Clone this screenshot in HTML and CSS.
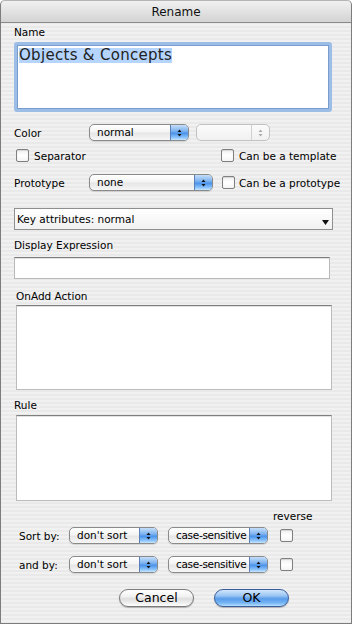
FILE: index.html
```html
<!DOCTYPE html>
<html lang="en">
<head>
  <meta charset="UTF-8">
  <meta name="viewport" content="width=device-width, initial-scale=1.0">
  <title>Rename</title>
  <link rel="stylesheet" href="styles.css">
</head>
<body>
<div class="window">
  <!-- Title bar -->
  <div class="titlebar">Rename</div>

  <div class="content">
    <div class="label">Name</div>
    <div class="name-field"><span class="selected">Objects &amp; Concepts</span></div>

    <!-- Color -->
    <div class="row color-row">
      <span class="row-label">Color</span>
      <div class="popup popup-color">
        <span class="popup-text">normal</span>
        <span class="arrows"><svg width="5" height="10" viewBox="0 0 5 10"><polygon points="0.5,4 2.5,1.5 4.5,4"/><polygon points="0.5,6 2.5,8.5 4.5,6"/></svg></span>
      </div>
      <div class="popup popup-disabled">
        <span class="popup-text"></span>
        <span class="arrows"><svg width="5" height="10" viewBox="0 0 5 10"><polygon points="0.5,4 2.5,1.5 4.5,4"/><polygon points="0.5,6 2.5,8.5 4.5,6"/></svg></span>
      </div>
    </div>

    <div class="row check-row">
      <div class="check check-sep"><span class="box"></span>Separator</div>
      <div class="check"><span class="box"></span>Can be a template</div>
    </div>

    <!-- Prototype -->
    <div class="row proto-row">
      <span class="row-label">Prototype</span>
      <div class="popup popup-proto">
        <span class="popup-text">none</span>
        <span class="arrows"><svg width="5" height="10" viewBox="0 0 5 10"><polygon points="0.5,4 2.5,1.5 4.5,4"/><polygon points="0.5,6 2.5,8.5 4.5,6"/></svg></span>
      </div>
      <div class="check check-proto"><span class="box"></span>Can be a prototype</div>
    </div>

    <div class="key-attrs">
      <span>Key attributes: normal</span>
      <svg width="7" height="5" viewBox="0 0 7 5"><polygon points="0,0 7,0 3.5,5"/></svg>
    </div>

    <div class="label label-display">Display Expression</div>
    <div class="text-field"></div>

    <div class="label label-onadd">OnAdd Action</div>
    <div class="text-area area-onadd"></div>

    <div class="label label-rule">Rule</div>
    <div class="text-area area-rule"></div>

    <!-- Sorting -->
    <div class="label label-reverse">reverse</div>
    <div class="row sort-row">
      <span class="sort-label">Sort by:</span>
      <div class="popup popup-sort">
        <span class="popup-text">don't sort</span>
        <span class="arrows"><svg width="5" height="10" viewBox="0 0 5 10"><polygon points="0.5,4 2.5,1.5 4.5,4"/><polygon points="0.5,6 2.5,8.5 4.5,6"/></svg></span>
      </div>
      <div class="popup popup-case">
        <span class="popup-text">case-sensitive</span>
        <span class="arrows"><svg width="5" height="10" viewBox="0 0 5 10"><polygon points="0.5,4 2.5,1.5 4.5,4"/><polygon points="0.5,6 2.5,8.5 4.5,6"/></svg></span>
      </div>
      <span class="box"></span>
    </div>
    <div class="row sort-row and-row">
      <span class="sort-label">and by:</span>
      <div class="popup popup-sort">
        <span class="popup-text">don't sort</span>
        <span class="arrows"><svg width="5" height="10" viewBox="0 0 5 10"><polygon points="0.5,4 2.5,1.5 4.5,4"/><polygon points="0.5,6 2.5,8.5 4.5,6"/></svg></span>
      </div>
      <div class="popup popup-case">
        <span class="popup-text">case-sensitive</span>
        <span class="arrows"><svg width="5" height="10" viewBox="0 0 5 10"><polygon points="0.5,4 2.5,1.5 4.5,4"/><polygon points="0.5,6 2.5,8.5 4.5,6"/></svg></span>
      </div>
      <span class="box"></span>
    </div>

    <!-- Buttons -->
    <div class="buttons">
      <button class="btn btn-cancel">Cancel</button>
      <button class="btn btn-ok">OK</button>
    </div>
  </div>
</div>
</body>
</html>
```

FILE: styles.css
```css
* {
  margin: 0;
  padding: 0;
  box-sizing: border-box;
}

html, body {
  background: #ffffff;
}

body {
  font-family: 'DejaVu Sans', 'Liberation Sans', sans-serif;
  font-size: 10.5px;
  color: #000;
  width: 352px;
  height: 624px;
  overflow: hidden;
}

/* Window */
.window {
  width: 352px;
  height: 624px;
  border: 1px solid #7c7c7c;
  border-top: none;
  border-radius: 5px 5px 0 0;
  background-color: #eeeeee;
  background-image: repeating-linear-gradient(to bottom, #f1f1f1 0, #f1f1f1 2px, #e9e9e9 2px, #e9e9e9 4px);
  display: flex;
  flex-direction: column;
  overflow: hidden;
}

.titlebar {
  height: 23px;
  line-height: 22px;
  margin: 0 -1px;
  text-align: center;
  font-size: 12px;
  background: linear-gradient(to bottom, #f1f1f1 0%, #e2e2e2 50%, #d3d3d3 100%);
  border: 1px solid #8a8a8a;
  border-top-color: #b5b5b5;
  border-radius: 5px 5px 0 0;
  color: #111;
}

.content {
  padding-left: 13px;
  display: flex;
  flex-direction: column;
  align-items: flex-start;
}

.label {
  height: 13px;
  line-height: 13px;
  margin-top: 3px;
  white-space: nowrap;
}

/* Name field with focus ring */
.name-field {
  margin-top: 3px;
  width: 318px;
  height: 70px;
  border: 3px solid #9bbde6;
  border-radius: 3px;
  background: #fff;
  box-shadow: inset 0 0 0 1px #7a9dcf;
  padding: 3px 0 0 2px;
  font-size: 15px;
  line-height: 15px;
  letter-spacing: 0.3px;
}

.name-field .selected {
  background: #b5d5ff;
  display: inline-block;
  height: 15px;
  color: #222;
}

/* Rows */
.row {
  display: flex;
  align-items: center;
  height: 17px;
}

.row-label {
  width: 75px;
}

.color-row {
  margin-top: 12px;
}

.check-row {
  margin-top: 6px;
}

.proto-row {
  margin-top: 10px;
}

/* Popup buttons */
.popup {
  height: 17px;
  display: flex;
  align-items: stretch;
  border: 1px solid #8a8a8a;
  border-radius: 5px;
  background: linear-gradient(to bottom, #ffffff 0%, #f4f4f4 45%, #e6e6e6 55%, #f6f6f6 100%);
  overflow: hidden;
  box-shadow: 0 1px 1px rgba(0, 0, 0, 0.12);
}

.popup-text {
  flex-grow: 1;
  padding-left: 7px;
  line-height: 15px;
  white-space: nowrap;
  overflow: hidden;
}

.arrows {
  width: 18px;
  display: flex;
  align-items: center;
  justify-content: center;
  background: linear-gradient(to bottom, #c4def9 0%, #7fb3f0 40%, #4a93ea 55%, #8fc6fb 85%, #c9e7ff 100%);
  border-left: 1px solid #5b7fb8;
}

.arrows svg {
  fill: #111;
}

.popup-color {
  width: 100px;
}

.popup-disabled {
  width: 74px;
  margin-left: 7px;
  border-color: #c2c2c2;
  background: linear-gradient(to bottom, #fbfbfb, #f1f1f1);
  box-shadow: none;
}

.popup-disabled .arrows {
  background: none;
  border-left: 1px solid #d0d0d0;
}

.popup-disabled .arrows svg {
  fill: #a8a8a8;
}

.popup-proto {
  width: 124px;
}

/* Checkboxes */
.check {
  display: flex;
  align-items: center;
  gap: 5px;
  white-space: nowrap;
}

.box {
  display: inline-block;
  width: 13px;
  height: 13px;
  border: 1px solid #7f7f7f;
  border-radius: 2px;
  background: linear-gradient(to bottom, #f0f0f0 0%, #ffffff 50%, #f4f4f4 100%);
  box-shadow: inset 0 1px 1px rgba(0, 0, 0, 0.12);
  flex-shrink: 0;
}

.check-sep {
  margin-left: 2px;
  width: 205px;
}

.check-proto {
  margin-left: 9px;
  gap: 4px;
}

/* Key attributes bar */
.key-attrs {
  margin-top: 17px;
  width: 319px;
  height: 22px;
  border: 1px solid #8f8f8f;
  background: linear-gradient(to bottom, #ffffff, #f1f1f1);
  display: flex;
  align-items: center;
  justify-content: space-between;
  padding: 0 3px 0 2px;
}

.key-attrs svg {
  fill: #111;
  margin-top: 6px;
}

/* Text fields */
.label-display {
  margin-top: 9px;
}

.text-field {
  margin-top: 5px;
  width: 316px;
  height: 22px;
  background: #fff;
  border: 1px solid #b9b9b9;
  border-top-color: #7e7e7e;
  box-shadow: inset 0 1px 0 #e2e2e2;
}

.label-onadd {
  margin-top: 11px;
  margin-left: 2px;
}

.text-area {
  margin-left: 2px;
  width: 316px;
  background: #fff;
  border: 1px solid #bcbcbc;
  border-top-color: #7e7e7e;
  box-shadow: inset 0 1px 0 #e2e2e2;
}

.area-onadd {
  margin-top: 2px;
  height: 85px;
}

.label-rule {
  margin-top: 9px;
}

.area-rule {
  margin-top: 3px;
  height: 86px;
}

/* Sorting */
.label-reverse {
  margin-top: 9px;
  margin-left: 259px;
}

.sort-row {
  margin-top: 4px;
}

.and-row {
  margin-top: 12px;
}

.sort-label {
  margin-left: 5px;
  width: 50px;
}

.popup-sort {
  width: 89px;
}

.popup-case {
  width: 100px;
  margin-left: 10px;
  margin-right: 12px;
}

.popup-case .popup-text {
  letter-spacing: -0.3px;
}

/* Buttons */
.buttons {
  margin-top: 16px;
  display: flex;
  padding-left: 105px;
}

.btn {
  width: 75px;
  height: 18px;
  border-radius: 9px;
  font-family: 'DejaVu Sans', 'Liberation Sans', sans-serif;
  font-size: 12.5px;
  line-height: 16px;
  color: #000;
  border: 1px solid #7a7a7a;
  background: linear-gradient(to bottom, #ffffff 0%, #f2f2f2 40%, #dedede 55%, #eeeeee 80%, #ffffff 100%);
  box-shadow: 0 1px 1px rgba(0, 0, 0, 0.25);
}

.btn-ok {
  margin-left: 20px;
  border-color: #3b5f9e;
  background: linear-gradient(to bottom, #d2e6fb 0%, #9cc6f4 35%, #5a9ce9 55%, #74b3f3 80%, #b5e0ff 100%);
}
```
